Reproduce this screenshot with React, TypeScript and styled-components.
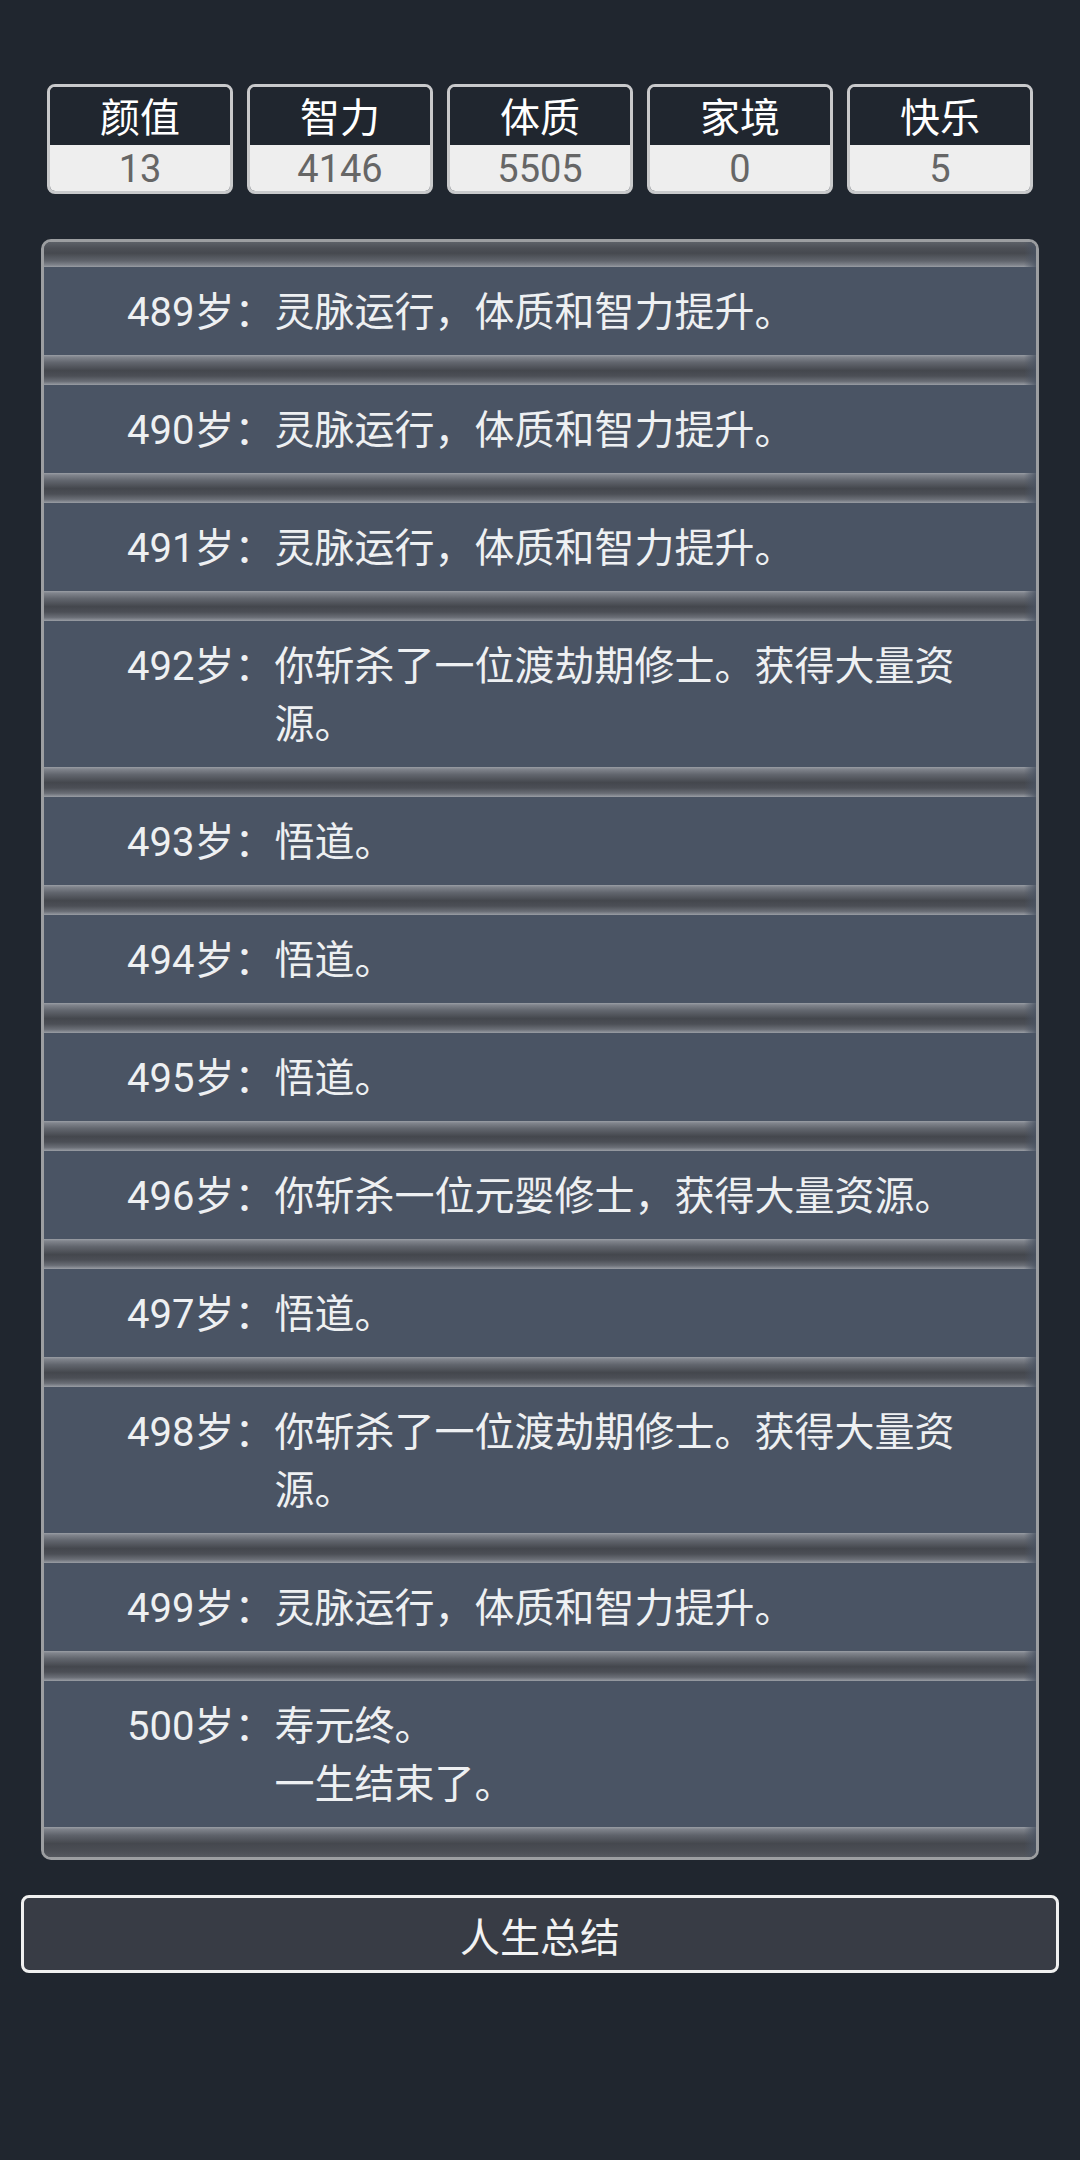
import React from 'react';
import styled, { createGlobalStyle } from 'styled-components';

const Global = createGlobalStyle`
  html, body {
    margin: 0;
    padding: 0;
    background: #20262f;
    min-height: 100%;
  }
  body {
    font-family: Roboto, "Noto Sans CJK SC", "Noto Sans", sans-serif;
    color: #eef0f2;
  }
`;

const Page = styled.div`
  min-height: 2160px;
  background: #20262f;
  padding-top: 84px;
  box-sizing: border-box;
`;

const StatsRow = styled.div`
  display: grid;
  grid-template-columns: repeat(5, 1fr);
  gap: 14px;
  padding: 0 47px;
`;

const StatBox = styled.div`
  border: 3px solid #c8c9cb;
  border-radius: 8px;
  overflow: hidden;
  display: flex;
  flex-direction: column;
`;

const StatName = styled.div`
  height: 58px;
  box-sizing: border-box;
  padding-top: 5px;
  background: #20262f;
  color: #ffffff;
  font-size: 40px;
  line-height: 53px;
  text-align: center;
`;

const StatValue = styled.div`
  height: 46px;
  box-sizing: border-box;
  padding-top: 2px;
  background: #eeeeee;
  color: #666666;
  font-size: 38px;
  line-height: 44px;
  text-align: center;
`;

const Panel = styled.div`
  margin: 45px 41px 0;
  border: 3px solid #9c9ea1;
  border-radius: 10px;
  overflow: hidden;
  display: flex;
  flex-direction: column;
  background: #45484f;
`;

const Groove = styled.div<{ $kind: 'top' | 'middle' | 'bottom' }>`
  position: relative;
  height: ${(p) => (p.$kind === 'top' ? 25 : p.$kind === 'bottom' ? 30 : 30)}px;
  background: ${(p) =>
    p.$kind === 'top'
      ? 'linear-gradient(to bottom, #5d6168 0%, #4c4f56 25%, #46494f 45%, #5f636b 75%, #7f838b 92%, #9a9ea5 100%)'
      : p.$kind === 'bottom'
      ? 'linear-gradient(to bottom, #9a9ea5 0%, #7e828a 8%, #5e626a 28%, #45484e 55%, #4b4e55 80%, #55585f 100%)'
      : 'linear-gradient(to bottom, #9a9ea5 0%, #80848c 7%, #62666e 25%, #44474d 52%, #4c4f56 70%, #6a6e76 88%, #9a9ea5 100%)'};
  &::after {
    content: '';
    position: absolute;
    inset: 0;
    background: linear-gradient(to right, transparent 0, transparent calc(100% - 12px), rgba(74, 84, 100, 0.85) 100%);
  }
`;

const Entry = styled.div`
  background: #4a5464;
  display: flex;
  padding: 17px 60px 13px 83px;
  font-size: 40px;
  line-height: 58px;
  color: #eef0f2;
`;

const Age = styled.div`
  flex: none;
  white-space: nowrap;
`;

const Content = styled.div`
  flex: 1;
  min-width: 0;
`;

const Line = styled.div``;

const SummaryButton = styled.button`
  display: block;
  box-sizing: border-box;
  width: calc(100% - 42px);
  margin: 35px 21px 0;
  height: 78px;
  background: #383c45;
  border: 3px solid #f0f0f0;
  border-radius: 8px;
  color: #f2f2f2;
  font-family: Roboto, "Noto Sans CJK SC", sans-serif;
  font-size: 40px;
  line-height: 72px;
  padding: 5px 0 0;
  text-align: center;
`;

const stats = [
  { name: '颜值', value: 13 },
  { name: '智力', value: 4146 },
  { name: '体质', value: 5505 },
  { name: '家境', value: 0 },
  { name: '快乐', value: 5 },
];

const entries: { age: number; lines: string[] }[] = [
  { age: 489, lines: ['灵脉运行，体质和智力提升。'] },
  { age: 490, lines: ['灵脉运行，体质和智力提升。'] },
  { age: 491, lines: ['灵脉运行，体质和智力提升。'] },
  { age: 492, lines: ['你斩杀了一位渡劫期修士。获得大量资源。'] },
  { age: 493, lines: ['悟道。'] },
  { age: 494, lines: ['悟道。'] },
  { age: 495, lines: ['悟道。'] },
  { age: 496, lines: ['你斩杀一位元婴修士，获得大量资源。'] },
  { age: 497, lines: ['悟道。'] },
  { age: 498, lines: ['你斩杀了一位渡劫期修士。获得大量资源。'] },
  { age: 499, lines: ['灵脉运行，体质和智力提升。'] },
  { age: 500, lines: ['寿元终。', '一生结束了。'] },
];

export default function App() {
  return (
    <Page>
      <Global />
      <StatsRow>
        {stats.map((s) => (
          <StatBox key={s.name}>
            <StatName>{s.name}</StatName>
            <StatValue>{s.value}</StatValue>
          </StatBox>
        ))}
      </StatsRow>
      <Panel>
        <Groove $kind="top" />
        {entries.map((e, i) => (
          <React.Fragment key={e.age}>
            <Entry>
              <Age>{e.age}岁：</Age>
              <Content>
                {e.lines.map((l, j) => (
                  <Line key={j}>{l}</Line>
                ))}
              </Content>
            </Entry>
            <Groove $kind={i === entries.length - 1 ? 'bottom' : 'middle'} />
          </React.Fragment>
        ))}
      </Panel>
      <SummaryButton>人生总结</SummaryButton>
    </Page>
  );
}
